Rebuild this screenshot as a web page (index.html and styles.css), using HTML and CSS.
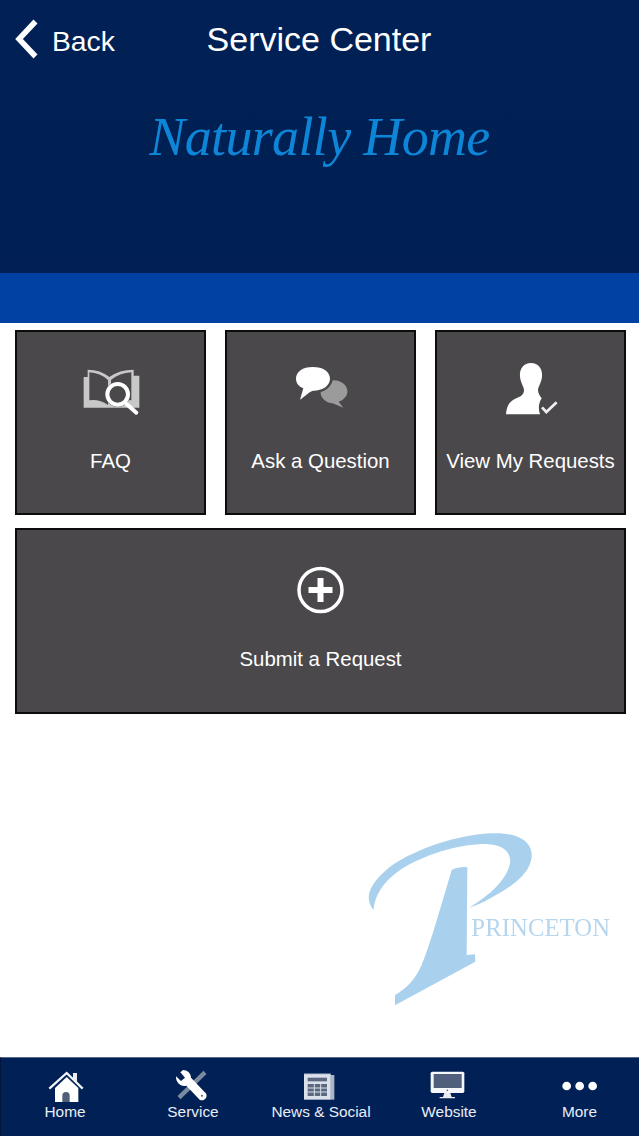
FILE: index.html
```html
<!DOCTYPE html>
<html lang="en">
<head>
<meta charset="utf-8">
<title>Service Center</title>
<link rel="stylesheet" href="styles.css">
</head>
<body>
<div class="page">
  <header class="header">
    <nav class="nav">
      <div class="back">
        <svg class="chevron" viewBox="0 0 24 40"><path d="M20.5 2.5 L4 20 L20.5 37.5" fill="none" stroke="#fff" stroke-width="5.5"/></svg>
        <span class="back-text">Back</span>
      </div>
      <div class="title">Service Center</div>
      <div></div>
    </nav>
    <div class="brand">Naturally Home</div>
  </header>
  <div class="band"></div>
  <main class="main">
    <div class="tiles">
      <a class="tile">
        <span class="tile-icon">
          <svg class="ic-faq" viewBox="0 0 240 210">
            <path d="M38 66 H50 V44 Q88 44 115 66 Q145 44 188 44 V62 H205 V158 H38Z" fill="#c9c8c8"/>
            <path d="M55 52 Q88 54 111 75 V150 Q85 132 55 136Z M120 75 Q145 54 181 52 V136 Q150 132 120 150Z" fill="#4a484b"/>
            <circle cx="140" cy="118" r="38" fill="#4a484b"/>
            <circle cx="140" cy="118" r="31" fill="#4a484b" stroke="#fff" stroke-width="12"/>
            <path d="M166 146 L196 173" stroke="#fff" stroke-width="12" stroke-linecap="round"/>
          </svg>
        </span>
        <span class="tile-label">FAQ</span>
      </a>
      <a class="tile">
        <span class="tile-icon">
          <svg class="ic-chat" viewBox="0 0 210 180">
            <path d="M104 110 A40 33 0 1 1 158 140 L172 158 L140 145 A40 33 0 0 1 104 110Z" fill="#9c9b9c"/>
            <path d="M80 31 A53 39 0 0 1 85 110 Q68 114 42 136 L52 104 A53 39 0 0 1 80 31Z" fill="#4a484b" stroke="#4a484b" stroke-width="8"/>
            <path d="M80 36 C112 36 132 50 132 71 C132 92 110 107 82 107 C68 110 60 122 42 134 L52 100 C38 94 30 84 30 71 C30 50 50 36 80 36Z" fill="#fff"/>
          </svg>
        </span>
        <span class="tile-label">Ask a Question</span>
      </a>
      <a class="tile">
        <span class="tile-icon">
          <svg class="ic-user" viewBox="0 0 210 210">
            <path d="M105 24 C128 24 140 42 138 64 C137 82 128 92 126 104 C126 116 132 122 137 130 C128 144 126 160 132 178 H30 C32 150 42 136 64 128 C80 122 84 114 84 104 C82 92 73 82 72 64 C70 42 82 24 105 24Z" fill="#fff"/>
            <path d="M138 157 L151 171 L182 142" fill="none" stroke="#f0f0f0" stroke-width="8"/>
          </svg>
        </span>
        <span class="tile-label">View My Requests</span>
      </a>
      <a class="tile tile-wide">
        <span class="tile-icon">
          <svg class="ic-plus" viewBox="0 0 70 70">
            <circle cx="34.5" cy="37" r="21.5" fill="none" stroke="#fff" stroke-width="3.5"/>
            <path d="M34.5 25 V49 M22.5 37 H46.5" stroke="#fff" stroke-width="6"/>
          </svg>
        </span>
        <span class="tile-label">Submit a Request</span>
      </a>
    </div>
    <div class="logo-row">
      <svg class="logo" viewBox="0 0 840 600">
        <path d="M70 270 C40 230 60 190 120 140 C200 85 320 46 420 40 C490 36 540 56 545 100 C548 150 500 190 450 218 C420 236 390 252 358 263 C420 225 470 180 480 130 C485 90 450 72 400 72 C320 74 220 105 150 150 C100 185 75 225 70 270Z" fill="#a9d1ee"/>
        <path d="M305 150 C320 142 340 140 352 142 L350 405 L375 403 L376 425 L135 556 L135 525 C170 505 195 480 215 435 C245 360 275 250 305 150Z" fill="#a9d1ee"/>
        <text class="logo-text" x="364" y="349" textLength="416">PRINCETON</text>
      </svg>
    </div>
  </main>
  <footer class="tabbar">
    <div class="tab">
      <svg class="tab-icon" viewBox="0 0 132 105">
        <path d="M90 12 H102 V40 L90 30Z" fill="#e9edf3"/>
        <path d="M19 59 L71 12 L119 59" fill="none" stroke="#f2f4f8" stroke-width="7"/>
        <path d="M36 57 L71 24 L106 57 V99 H36Z" fill="#fff"/>
        <path d="M58 99 V80 A11 11 0 0 1 80 80 V99Z" fill="#4f5f78"/>
      </svg>
      <span class="tab-label">Home</span>
    </div>
    <div class="tab">
      <svg class="tab-icon" viewBox="0 0 132 105">
        <path d="M24 86 L102 10" stroke="#7c8aa0" stroke-width="13"/>
        <path d="M36 3 C48 3 60 12 60 26 L100 68 A10 10 0 0 1 86 92 L46 50 C30 54 14 42 15 22 L30 36 L42 26 L28 10Z" fill="#fff"/>
        <circle cx="93" cy="80" r="3" fill="#4f5f78"/>
      </svg>
      <span class="tab-label">Service</span>
    </div>
    <div class="tab">
      <svg class="tab-icon" viewBox="0 0 132 105">
        <rect x="94" y="18" width="12" height="74" fill="#aab6c8"/>
        <rect x="15" y="14" width="80" height="78" fill="#dbe1ea"/>
        <path d="M15 15 H95" stroke="#8a97ab" stroke-width="3" stroke-dasharray="3 4"/>
        <rect x="26" y="26" width="58" height="11" fill="#5a6880"/>
        <path d="M26 45 H84 V81 H26Z" fill="#5a6880"/>
        <path d="M46 45 V81 M65 45 V81 M26 57 H84 M26 69 H84" stroke="#dbe1ea" stroke-width="3"/>
      </svg>
      <span class="tab-label">News &amp; Social</span>
    </div>
    <div class="tab">
      <svg class="tab-icon" viewBox="0 0 132 105">
        <rect x="11" y="8" width="101" height="64" rx="5" fill="#f4f6f9"/>
        <rect x="20" y="15" width="84" height="42" fill="#4f5f7c"/>
        <circle cx="61" cy="64" r="2.5" fill="#4f5f7c"/>
        <path d="M52 72 H70 L74 84 H84 V88 H38 V84 H48Z" fill="#e9edf3"/>
      </svg>
      <span class="tab-label">Website</span>
    </div>
    <div class="tab tab-more">
      <svg class="tab-icon" viewBox="0 0 132 105">
        <circle cx="26" cy="51" r="13" fill="#fff"/>
        <circle cx="65" cy="51" r="13" fill="#fff"/>
        <circle cx="104" cy="51" r="13" fill="#fff"/>
      </svg>
      <span class="tab-label">More</span>
    </div>
  </footer>
</div>
</body>
</html>
```

FILE: styles.css
```css
* { box-sizing: border-box; }

html, body {
  margin: 0;
  padding: 0;
}

body {
  background: #fff;
  font-family: "Liberation Sans", Arial, sans-serif;
}

.page {
  width: 639px;
  height: 1136px;
  display: flex;
  flex-direction: column;
  overflow: hidden;
}

.header {
  height: 273px;
  background: linear-gradient(#012156, #001f52 90%, #011f54);
  color: #fff;
  padding-top: 19px;
}

.nav {
  display: grid;
  grid-template-columns: 1fr auto 1fr;
  align-items: center;
  height: 40px;
  padding-right: 1px;
}

.back {
  display: flex;
  align-items: center;
  padding-left: 15px;
  gap: 13px;
}

.chevron {
  width: 24px;
  height: 40px;
  display: block;
}

.back-text {
  font-size: 28.3px;
  line-height: 40px;
  position: relative;
  top: 2px;
}

.title {
  font-size: 34px;
  line-height: 40px;
}

.brand {
  margin-top: 38px;
  text-align: center;
  font-family: "Liberation Serif", "Times New Roman", serif;
  font-style: italic;
  font-size: 54px;
  line-height: 80px;
  color: #0e86d8;
  letter-spacing: -0.65px;
}

.band {
  height: 50px;
  background: #0041a3;
}

.main {
  flex: 1;
  background: #fff;
  padding-top: 7px;
}

.tiles {
  display: grid;
  grid-template-columns: repeat(3, 191px);
  grid-template-rows: 185px 186px;
  column-gap: 19px;
  row-gap: 13px;
  padding-left: 15px;
}

.tile {
  display: flex;
  flex-direction: column;
  align-items: center;
  padding-top: 23px;
  background: #4a484b;
  border: 2px solid #0c0c0c;
  color: #fff;
}

.tile-wide {
  grid-column: 1 / 4;
}

.tile-icon {
  height: 70px;
  display: block;
}

.tile-icon svg {
  display: block;
}

.ic-faq { width: 80px; height: 70px; }
.ic-chat { width: 70px; height: 60px; }
.ic-user { width: 70px; height: 70px; }
.ic-plus { width: 70px; height: 70px; }

.tile-label {
  margin-top: 24px;
  font-size: 20.4px;
  line-height: 24px;
  white-space: nowrap;
}

.logo-row {
  display: flex;
  justify-content: flex-end;
  padding-right: 9px;
  margin-top: 106px;
}

.logo {
  width: 280px;
  height: 200px;
  display: block;
  filter: blur(0.5px);
}

.logo-text {
  font-family: "Liberation Serif", "Times New Roman", serif;
  font-size: 74px;
  fill: #b5d6ee;
}

.tabbar {
  height: 79px;
  background: #012156;
  border-top: 1px solid #55678a;
  border-left: 1px solid #01143a;
  display: grid;
  grid-template-columns: repeat(5, 128px);
  padding-top: 11px;
}

.tab {
  display: flex;
  flex-direction: column;
  align-items: center;
}

.tab-more {
  padding-left: 5px;
}

.tab-icon {
  width: 44px;
  height: 35px;
  display: block;
}

.tab-label {
  font-size: 15.4px;
  line-height: 16px;
  color: #e9eef6;
  white-space: nowrap;
}
```
